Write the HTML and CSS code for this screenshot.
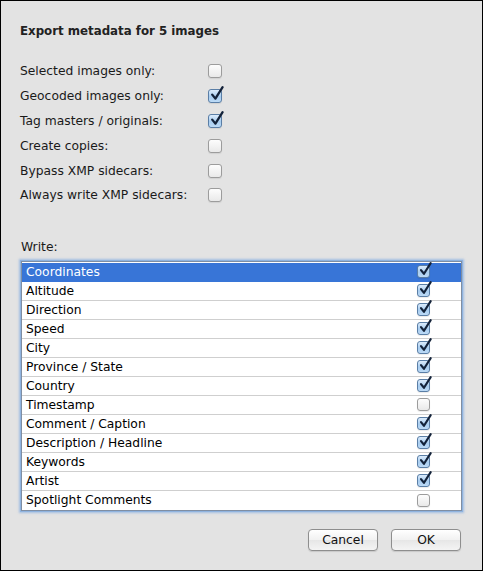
FILE: index.html
```html
<!DOCTYPE html>
<html>
<head>
<meta charset="utf-8">
<link rel="stylesheet" href="styles.css">
</head>
<body>
<div class="window">
  <div class="title">Export metadata for 5 images</div>
  <div class="options">
    <div class="opt"><span class="lbl">Selected images only:</span><span class="cb"></span></div>
    <div class="opt"><span class="lbl">Geocoded images only:</span><span class="cb on"><svg viewBox="0 0 15 16" width="15" height="16"><path d="M3.2 8.6 L6.4 12.6 L13.6 1.2" /></svg></span></div>
    <div class="opt"><span class="lbl">Tag masters / originals:</span><span class="cb on"><svg viewBox="0 0 15 16" width="15" height="16"><path d="M3.2 8.6 L6.4 12.6 L13.6 1.2" /></svg></span></div>
    <div class="opt"><span class="lbl">Create copies:</span><span class="cb"></span></div>
    <div class="opt"><span class="lbl">Bypass XMP sidecars:</span><span class="cb"></span></div>
    <div class="opt"><span class="lbl">Always write XMP sidecars:</span><span class="cb"></span></div>
  </div>
  <div class="write">Write:</div>
  <div class="list">
    <div class="row sel"><span>Coordinates</span><span class="cb small on"><svg viewBox="0 0 15 16" width="14" height="15"><path d="M3.2 8.6 L6.4 12.6 L13.6 1.2" /></svg></span></div>
    <div class="row"><span>Altitude</span><span class="cb small on"><svg viewBox="0 0 15 16" width="14" height="15"><path d="M3.2 8.6 L6.4 12.6 L13.6 1.2" /></svg></span></div>
    <div class="row"><span>Direction</span><span class="cb small on"><svg viewBox="0 0 15 16" width="14" height="15"><path d="M3.2 8.6 L6.4 12.6 L13.6 1.2" /></svg></span></div>
    <div class="row"><span>Speed</span><span class="cb small on"><svg viewBox="0 0 15 16" width="14" height="15"><path d="M3.2 8.6 L6.4 12.6 L13.6 1.2" /></svg></span></div>
    <div class="row"><span>City</span><span class="cb small on"><svg viewBox="0 0 15 16" width="14" height="15"><path d="M3.2 8.6 L6.4 12.6 L13.6 1.2" /></svg></span></div>
    <div class="row"><span>Province / State</span><span class="cb small on"><svg viewBox="0 0 15 16" width="14" height="15"><path d="M3.2 8.6 L6.4 12.6 L13.6 1.2" /></svg></span></div>
    <div class="row"><span>Country</span><span class="cb small on"><svg viewBox="0 0 15 16" width="14" height="15"><path d="M3.2 8.6 L6.4 12.6 L13.6 1.2" /></svg></span></div>
    <div class="row"><span>Timestamp</span><span class="cb small"></span></div>
    <div class="row"><span>Comment / Caption</span><span class="cb small on"><svg viewBox="0 0 15 16" width="14" height="15"><path d="M3.2 8.6 L6.4 12.6 L13.6 1.2" /></svg></span></div>
    <div class="row"><span>Description / Headline</span><span class="cb small on"><svg viewBox="0 0 15 16" width="14" height="15"><path d="M3.2 8.6 L6.4 12.6 L13.6 1.2" /></svg></span></div>
    <div class="row"><span>Keywords</span><span class="cb small on"><svg viewBox="0 0 15 16" width="14" height="15"><path d="M3.2 8.6 L6.4 12.6 L13.6 1.2" /></svg></span></div>
    <div class="row"><span>Artist</span><span class="cb small on"><svg viewBox="0 0 15 16" width="14" height="15"><path d="M3.2 8.6 L6.4 12.6 L13.6 1.2" /></svg></span></div>
    <div class="row"><span>Spotlight Comments</span><span class="cb small"></span></div>
  </div>
  <div class="buttons">
    <button class="btn">Cancel</button>
    <button class="btn">OK</button>
  </div>
</div>
</body>
</html>
```
FILE: styles.css
```css
* { box-sizing: border-box; }
html, body { margin: 0; padding: 0; }
body {
  font-family: "DejaVu Sans", sans-serif;
  font-size: 12.3px;
  color: #1a1a1a;
  background: #000;
}
.window {
  width: 483px;
  height: 571px;
  border: 1px solid #000;
  background: #e3e3e3;
  padding: 0 21px 0 19px;
  display: flex;
  flex-direction: column;
}
.title {
  font-weight: bold;
  font-size: 11.8px;
  height: 20px;
  line-height: 20px;
  margin-top: 20px;
  color: #222;
}
.options {
  margin-top: 18px;
  display: flex;
  flex-direction: column;
}
.opt {
  height: 24.8px;
  display: flex;
  align-items: center;
}
.lbl {
  width: 188px;
}
.cb {
  position: relative;
  width: 14px;
  height: 14px;
  border: 1px solid #9c9c9c;
  border-radius: 3px;
  background: linear-gradient(#fdfdfd, #e9e9e9);
  box-shadow: 0 1px 1px rgba(0,0,0,0.08);
  flex: none;
}
.cb.on {
  border-color: #5a7ea6;
  background: linear-gradient(#dcecfc, #a8cdf0 55%, #bcdaf6);
}
.cb svg {
  position: absolute;
  left: 0px;
  top: -4px;
  overflow: visible;
}
.cb svg path {
  fill: none;
  stroke: #13223a;
  stroke-width: 2.3;
  stroke-linecap: round;
  stroke-linejoin: round;
}
.cb.small {
  width: 13px;
  height: 13px;
}
.write {
  margin-top: 31px;
  height: 16px;
  line-height: 16px;
  padding-left: 1px;
}
.list {
  margin-top: 6px;
  margin-left: 1px;
  width: 441px;
  height: 250px;
  background: #fff;
  border: 1px solid #7f8ea3;
  box-shadow: 0 0 0 1px #8fb3df, 0 0 2px 2px rgba(110,160,225,0.55);
  padding-top: 1px;
  display: flex;
  flex-direction: column;
}
.row {
  height: 19px;
  border-bottom: 1px solid #cfcfcf;
  display: flex;
  align-items: center;
  justify-content: space-between;
  padding: 0 31px 0 4px;
  color: #000;
  flex: none;
}
.row:last-child { border-bottom: none; }
.row.sel {
  background: #3875d7;
  color: #fff;
  border-bottom-color: #3875d7;
}
.buttons {
  margin-top: 18px;
  display: flex;
  justify-content: flex-end;
  gap: 13px;
}
.btn {
  width: 70px;
  height: 22px;
  font-family: "DejaVu Sans", sans-serif;
  font-size: 12.3px;
  color: #111;
  border: 1px solid #8e8e8e;
  border-radius: 4px;
  background: linear-gradient(#ffffff, #f1f1f1 50%, #e6e6e6 51%, #f4f4f4);
  box-shadow: 0 1px 1px rgba(0,0,0,0.12);
  padding: 0;
}
```
